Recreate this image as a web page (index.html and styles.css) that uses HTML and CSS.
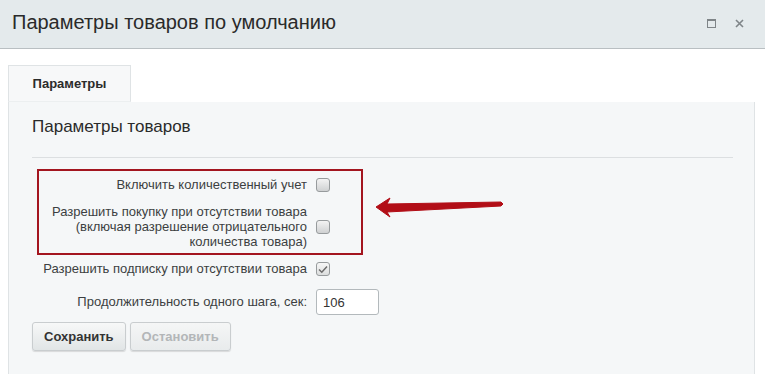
FILE: index.html
```html
<!DOCTYPE html>
<html lang="ru">
<head>
    <meta charset="UTF-8">
    <title>Параметры товаров по умолчанию</title>
    <link rel="stylesheet" href="styles.css">
</head>
<body>

    <div class="dialog-head">
        <div class="dialog-title">Параметры товаров по умолчанию</div>
        <div class="dialog-tools">
            <span class="tool-max"></span>
            <svg class="tool-close" width="9" height="9" viewBox="0 0 9 9">
                <path d="M1 1 L8 8 M8 1 L1 8" stroke="#7f8588" stroke-width="1.6" fill="none"/>
            </svg>
        </div>
    </div>

    <div class="dialog-body">
        <div class="tabs">
            <div class="tab active">Параметры</div>
        </div>

        <div class="panel">
            <h2 class="panel-title">Параметры товаров</h2>

            <div class="form">
                <!-- highlighted rows -->
                <div class="group">
                    <div class="row">
                        <div class="field-label">Включить количественный учет</div>
                        <span class="check"></span>
                    </div>
                    <div class="row row-tall">
                        <div class="field-label">Разрешить покупку при отсутствии товара<br>(включая разрешение отрицательного<br>количества товара)</div>
                        <span class="check"></span>
                    </div>
                </div>

                <div class="row row-sub">
                    <div class="field-label">Разрешить подписку при отсутствии товара</div>
                    <span class="check checked">
                        <svg width="10" height="9" viewBox="0 0 10 9">
                            <path d="M1 4.5 L3.8 7.2 L9 1.5" stroke="#6b6b6b" stroke-width="1.5" fill="none"/>
                        </svg>
                    </span>
                </div>

                <div class="row row-step">
                    <div class="field-label">Продолжительность одного шага, сек:</div>
                    <input class="text-input" type="text" value="106">
                </div>

                <div class="buttons">
                    <button class="btn">Сохранить</button>
                    <button class="btn" disabled>Остановить</button>
                </div>
            </div>

            <!-- annotation arrow -->
            <svg class="arrow" width="132" height="24" viewBox="0 0 132 24">
                <polygon points="3,11 17,2 14,8 128,6 130,8 128,10 14,16 17,21"
                         fill="#b20e17" stroke="#b20e17" stroke-width="1" stroke-linejoin="round"/>
            </svg>
        </div>
    </div>

</body>
</html>
```

FILE: styles.css
```css
:root {
    --head-bg: #e4eaec;
    --panel-bg: #f5f7f8;
    --line: #dfe3e5;
    --text: #3c3f41;
    --mark: #a3151f;
}

body {
    margin: 0;
    background: #fff;
    font-family: "Liberation Sans", Arial, sans-serif;
    color: var(--text);
    width: 765px;
    height: 374px;
    overflow: hidden;
}

.dialog-head {
    height: 48px;
    background: var(--head-bg);
    border-bottom: 1px solid #b9bfc2;
    display: flex;
    align-items: center;
    justify-content: space-between;
    padding: 0 21px 0 12px;
}

.dialog-title {
    font-size: 20px;
    color: #2a2a2a;
    margin-top: -3px;
}

.dialog-tools {
    display: flex;
    align-items: center;
    gap: 19px;
    margin-top: -1px;
}

.tool-max {
    display: block;
    width: 7px;
    height: 6px;
    border: 1px solid #7f8588;
    border-top-width: 2px;
}

.tool-close {
    display: block;
}

.dialog-body {
    padding: 16px 10px 0 8px;
}

.tabs {
    display: flex;
}

.tab {
    width: 121px;
    height: 35px;
    line-height: 35px;
    text-align: center;
    font-size: 13px;
    font-weight: bold;
    color: #2b2b2b;
    background: #f7f8f9;
    border: 1px solid var(--line);
    border-bottom: 1px solid #eceff0;
    box-sizing: content-box;
}

.panel {
    position: relative;
    background: var(--panel-bg);
    border: 1px solid var(--line);
    border-top: none;
    border-bottom: none;
    height: 259px;
    padding: 15px 21px 0 23px;
}

.panel-title {
    margin: 0;
    font-size: 17px;
    font-weight: normal;
    line-height: 20px;
    color: #2a2a2a;
    padding-bottom: 20px;
    border-bottom: 1px solid #dcdfe1;
}

.form {
    font-size: 13px;
}

.group {
    margin: 13px 0 0 7px;
    width: 322px;
    padding: 6px 0 4px;
    outline: 2px solid var(--mark);
}

.row {
    display: flex;
    align-items: center;
    gap: 9px;
    line-height: 16px;
}

.field-label {
    width: 275px;
    text-align: right;
}

.group .field-label {
    width: 268px;
}

.row-tall {
    margin-top: 11px;
    line-height: 15px;
}

.row-sub {
    margin-top: 8px;
}

.row-step {
    margin-top: 12px;
}

.check {
    display: flex;
    align-items: center;
    justify-content: center;
    width: 12px;
    height: 12px;
    border: 1px solid #979b9d;
    border-radius: 3px;
    background: linear-gradient(#f3f3f3, #cfd1d2);
}

.check.checked {
    background: linear-gradient(#f7f7f7, #dcdede);
}

.text-input {
    width: 49px;
    height: 24px;
    padding: 0 6px;
    border: 1px solid #b3b9bc;
    border-radius: 3px;
    background: #fff;
    font-family: "Liberation Sans", Arial, sans-serif;
    font-size: 13px;
    color: #333;
    margin: 0;
}

.buttons {
    display: flex;
    gap: 4px;
    margin-top: 7px;
}

.btn {
    height: 29px;
    padding: 0 11px;
    border: 1px solid #c9cdcf;
    border-radius: 3px;
    background: linear-gradient(#f7f8f8, #e1e5e6);
    box-shadow: 0 1px 1px rgba(0, 0, 0, 0.12);
    font-family: "Liberation Sans", Arial, sans-serif;
    font-size: 13px;
    font-weight: bold;
    color: #333;
}

.btn:disabled {
    color: #b3b6b8;
    background: linear-gradient(#f5f6f6, #e8ebec);
}

.arrow {
    position: absolute;
    left: 364px;
    top: 94px;
}
```
